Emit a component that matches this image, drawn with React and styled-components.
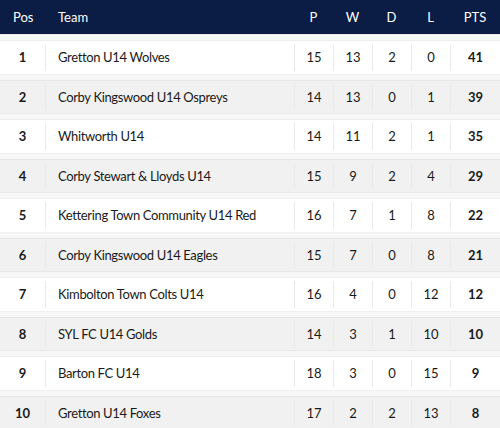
import React from "react";
import styled, { createGlobalStyle } from "styled-components";

const Global = createGlobalStyle`
  html, body { margin: 0; padding: 0; background: #f7f7f7; }
  body { font-family: Lato, "Open Sans", sans-serif; }
`;

const COLS = "45px 1fr 39px 39px 39px 39px 50px";

const Table = styled.div`
  width: 500px;
  background: #f7f7f7;
`;

const Header = styled.div`
  display: grid;
  grid-template-columns: ${COLS};
  height: 34px;
  background: #0b1d45;
  color: #ffffff;
  font-size: 13px;
  align-items: center;
`;

const HeadCell = styled.div`
  text-align: ${(p) => (p.$left ? "left" : "center")};
  padding-left: ${(p) => (p.$left ? "13px" : "0")};
`;

const Body = styled.div`
  display: flex;
  flex-direction: column;
  gap: 5px;
  padding-top: 5px;
  border-top: 1px solid #f3e9e2;
`;

const Row = styled.div`
  display: grid;
  grid-template-columns: ${COLS};
  height: 34.5px;
  box-sizing: border-box;
  background: ${(p) => (p.$alt ? "#f1f1f1" : "#ffffff")};
  border-top: 1px solid ${(p) => (p.$alt ? "#e6e6e6" : "#eeeeee")};
  border-bottom: 1px solid ${(p) => (p.$alt ? "#e9e9e9" : "#f0f0f0")};
  color: #1a1a1a;
  font-size: 13px;
`;

const Cell = styled.div`
  display: flex;
  align-items: center;
  justify-content: ${(p) => (p.$team ? "flex-start" : "center")};
  padding-left: ${(p) => (p.$team ? "12px" : "0")};
  margin: 3px 0;
  border-left: ${(p) => (p.$first ? "none" : "1px solid #e9e9e9")};
  font-weight: ${(p) => (p.$bold ? 700 : 400)};
  letter-spacing: ${(p) => (p.$team ? "-0.35px" : "0")};
  white-space: nowrap;
`;

const rows = [
  [1, "Gretton U14 Wolves", 15, 13, 2, 0, 41],
  [2, "Corby Kingswood U14 Ospreys", 14, 13, 0, 1, 39],
  [3, "Whitworth U14", 14, 11, 2, 1, 35],
  [4, "Corby Stewart & Lloyds U14", 15, 9, 2, 4, 29],
  [5, "Kettering Town Community U14 Red", 16, 7, 1, 8, 22],
  [6, "Corby Kingswood U14 Eagles", 15, 7, 0, 8, 21],
  [7, "Kimbolton Town Colts U14", 16, 4, 0, 12, 12],
  [8, "SYL FC U14 Golds", 14, 3, 1, 10, 10],
  [9, "Barton FC U14", 18, 3, 0, 15, 9],
  [10, "Gretton U14 Foxes", 17, 2, 2, 13, 8],
];

export default function App() {
  return (
    <Table>
      <Global />
      <Header>
        <HeadCell $left>Pos</HeadCell>
        <HeadCell $left>Team</HeadCell>
        <HeadCell>P</HeadCell>
        <HeadCell>W</HeadCell>
        <HeadCell>D</HeadCell>
        <HeadCell>L</HeadCell>
        <HeadCell>PTS</HeadCell>
      </Header>
      <Body>
        {rows.map((r, i) => (
          <Row key={r[0]} $alt={i % 2 === 1}>
            <Cell $first $bold>{r[0]}</Cell>
            <Cell $team>{r[1]}</Cell>
            <Cell>{r[2]}</Cell>
            <Cell>{r[3]}</Cell>
            <Cell>{r[4]}</Cell>
            <Cell>{r[5]}</Cell>
            <Cell $bold>{r[6]}</Cell>
          </Row>
        ))}
      </Body>
    </Table>
  );
}
